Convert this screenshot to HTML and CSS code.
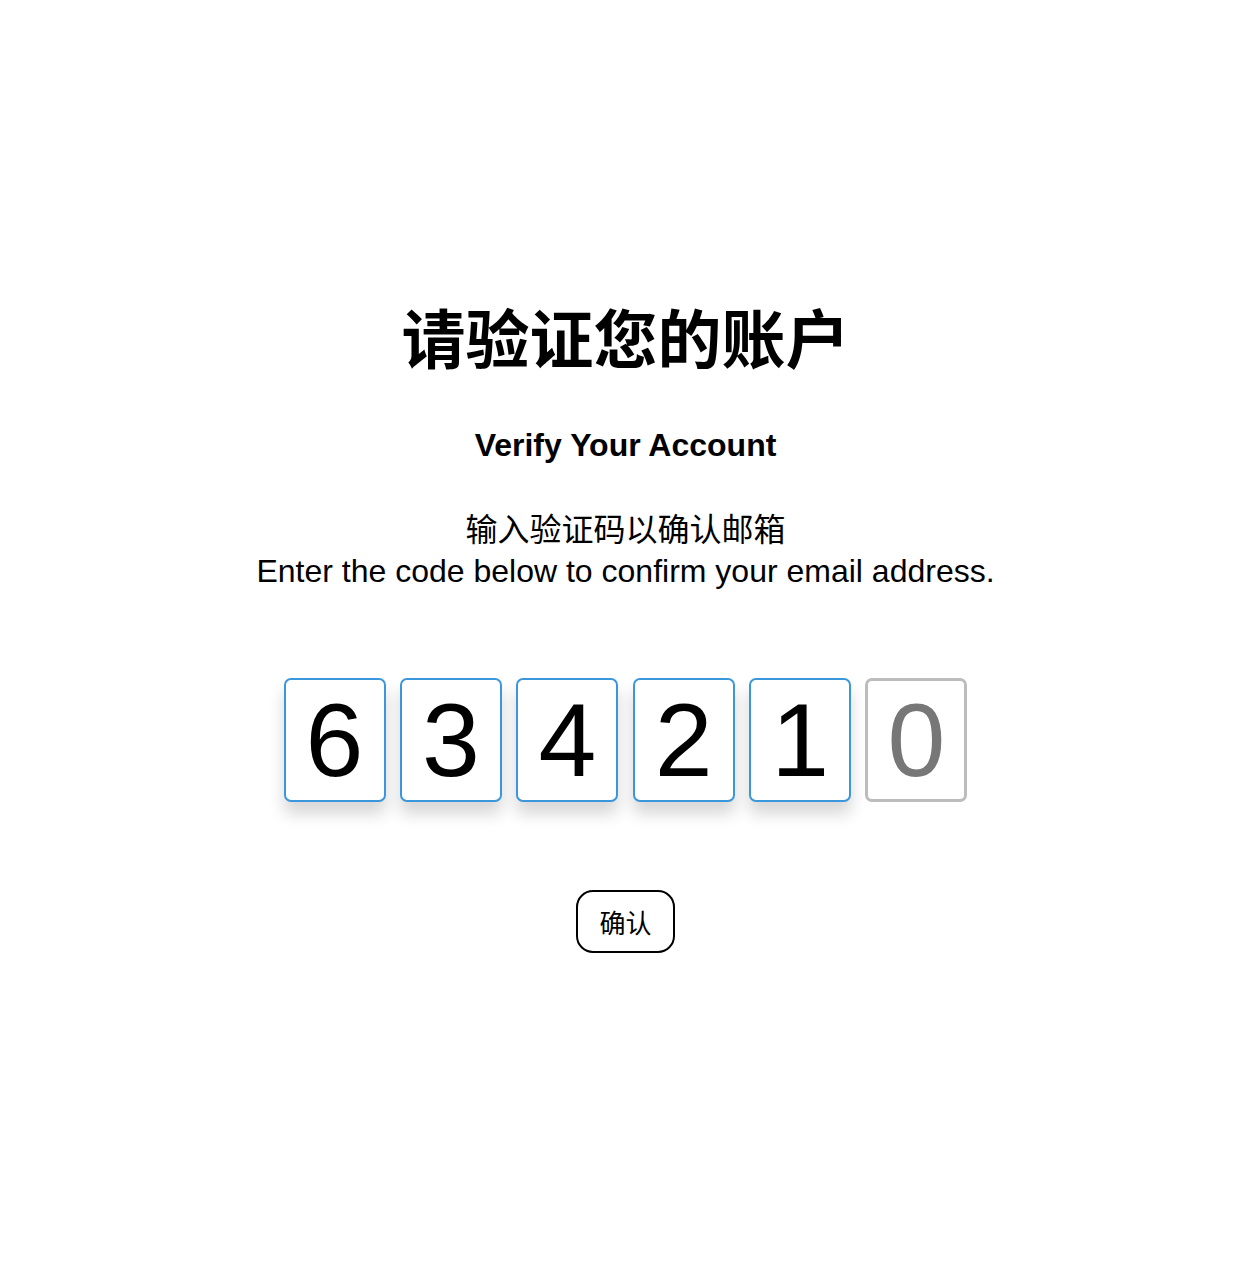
FILE: index.html
```html
<!DOCTYPE html>
<html lang="zh">
<head>
<meta charset="utf-8">
<title>请验证您的账户</title>
<link rel="stylesheet" href="styles.css">
</head>
<body>
<main class="page">
  <h1 class="title">请验证您的账户</h1>
  <h2 class="subtitle">Verify Your Account</h2>
  <p class="desc">输入验证码以确认邮箱<br>Enter the code below to confirm your email address.</p>
  <div class="code">
    <div class="digit filled">6</div>
    <div class="digit filled">3</div>
    <div class="digit filled">4</div>
    <div class="digit filled">2</div>
    <div class="digit filled">1</div>
    <div class="digit empty">0</div>
  </div>
  <button class="confirm" type="button">确认</button>
</main>
</body>
</html>
```

FILE: styles.css
```css
html, body {
  margin: 0;
  padding: 0;
  background: #fff;
}

body {
  font-family: "Liberation Sans", "Noto Sans CJK SC", sans-serif;
  color: #000;
}

.page {
  display: flex;
  flex-direction: column;
  align-items: center;
  padding-top: 303px;
  padding-right: 5px;
}

.title {
  margin: 0;
  font-size: 64px;
  line-height: 64px;
  font-weight: 700;
  font-family: "Noto Sans CJK SC", sans-serif;
}

.subtitle {
  margin: 62px 0 0;
  font-size: 32px;
  line-height: 32px;
  font-weight: 700;
}

.desc {
  margin: 49px 0 0;
  font-size: 32px;
  line-height: 41px;
  text-align: center;
}

.code {
  display: flex;
  gap: 14.4px;
  margin-top: 86px;
}

.digit {
  box-sizing: border-box;
  width: 102px;
  height: 124px;
  border-radius: 7px;
  background: #fff;
  font-size: 104px;
  line-height: 120px;
  text-align: center;
}

.digit.filled {
  border: 2px solid #3a97db;
  color: #000;
  box-shadow: 0 12px 16px rgba(0, 0, 0, 0.16);
}

.digit.empty {
  border: 3px solid #bcbcbc;
  color: #777;
  line-height: 118px;
}

.confirm {
  margin-top: 88px;
  padding: 14px 21px;
  border: 2px solid #000;
  border-radius: 17px;
  background: #fff;
  color: #000;
  font-family: "Noto Sans CJK SC", sans-serif;
  font-size: 26px;
  line-height: 31px;
}
```
